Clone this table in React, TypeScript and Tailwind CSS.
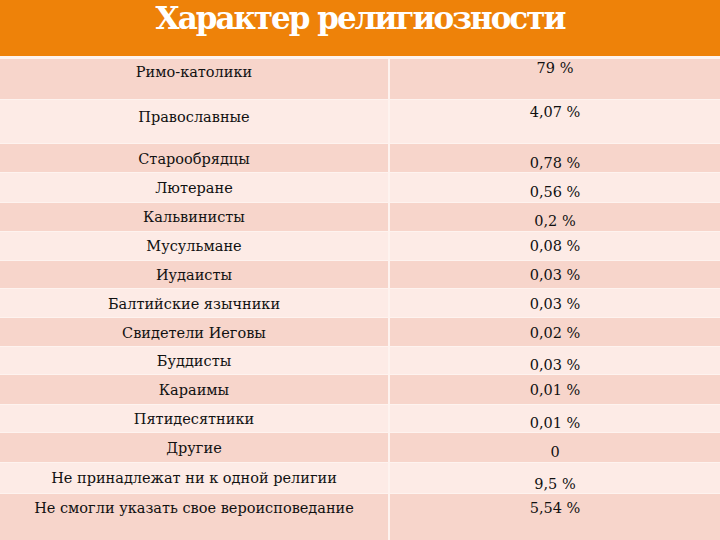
const rows = [
  { name: 'Римо-католики', value: '79 %', h: 'h-[40px]', pl: 'pt-[4px]', pr: 'pt-[0px]', dark: true },
  { name: 'Православные', value: '4,07 %', h: 'h-[43px]', pl: 'pt-[8px]', pr: 'pt-[3px]', dark: false },
  { name: 'Старообрядцы', value: '0,78 %', h: 'h-[28px]', pl: 'pt-[6px]', pr: 'pt-[10px]', dark: true },
  { name: 'Лютеране', value: '0,56 %', h: 'h-[29px]', pl: 'pt-[6px]', pr: 'pt-[10px]', dark: false },
  { name: 'Кальвинисты', value: '0,2 %', h: 'h-[28px]', pl: 'pt-[5px]', pr: 'pt-[9px]', dark: true },
  { name: 'Мусульмане', value: '0,08 %', h: 'h-[28px]', pl: 'pt-[5px]', pr: 'pt-[5px]', dark: false },
  { name: 'Иудаисты', value: '0,03 %', h: 'h-[27px]', pl: 'pt-[5px]', pr: 'pt-[5px]', dark: true },
  { name: 'Балтийские язычники', value: '0,03 %', h: 'h-[28px]', pl: 'pt-[6px]', pr: 'pt-[6px]', dark: false },
  { name: 'Свидетели Иеговы', value: '0,02 %', h: 'h-[28px]', pl: 'pt-[6px]', pr: 'pt-[6px]', dark: true },
  { name: 'Буддисты', value: '0,03 %', h: 'h-[27px]', pl: 'pt-[5px]', pr: 'pt-[9px]', dark: false },
  { name: 'Караимы', value: '0,01 %', h: 'h-[29px]', pl: 'pt-[6px]', pr: 'pt-[6px]', dark: true },
  { name: 'Пятидесятники', value: '0,01 %', h: 'h-[27px]', pl: 'pt-[5px]', pr: 'pt-[9px]', dark: false },
  { name: 'Другие', value: '0', h: 'h-[29px]', pl: 'pt-[6px]', pr: 'pt-[10px]', dark: true },
  { name: 'Не принадлежат ни к одной религии', value: '9,5 %', h: 'h-[30px]', pl: 'pt-[6px]', pr: 'pt-[12px]', dark: false },
  { name: 'Не смогли указать свое вероисповедание', value: '5,54 %', h: 'h-[46px]', pl: 'pt-[5px]', pr: 'pt-[5px]', dark: true },
];

export default function App() {
  return (
    <div className="w-[720px] h-[540px] overflow-hidden bg-[#fef3ef] flex flex-col font-['DejaVu_Serif'] text-[#111111]">
      <div className="h-[56px] shrink-0 bg-[#ee8209] flex justify-center overflow-hidden">
        <h1 className="text-[31px] leading-[36px] tracking-[-2px] font-bold text-white">Характер религиозности</h1>
      </div>
      <div className="mt-[3px] flex flex-col gap-px">
        {rows.map((r) => (
          <div key={r.name} className={`${r.h} flex shrink-0 ${r.dark ? 'bg-[#f7d5cb]' : 'bg-[#fdebe6]'}`}>
            <div className={`w-[390px] border-r-2 border-[#fef3ef] text-center text-[14.5px] leading-[18px] ${r.pl}`}>
              {r.name}
            </div>
            <div className={`flex-1 text-center text-[14.5px] leading-[18px] ${r.pr}`}>{r.value}</div>
          </div>
        ))}
      </div>
    </div>
  );
}
